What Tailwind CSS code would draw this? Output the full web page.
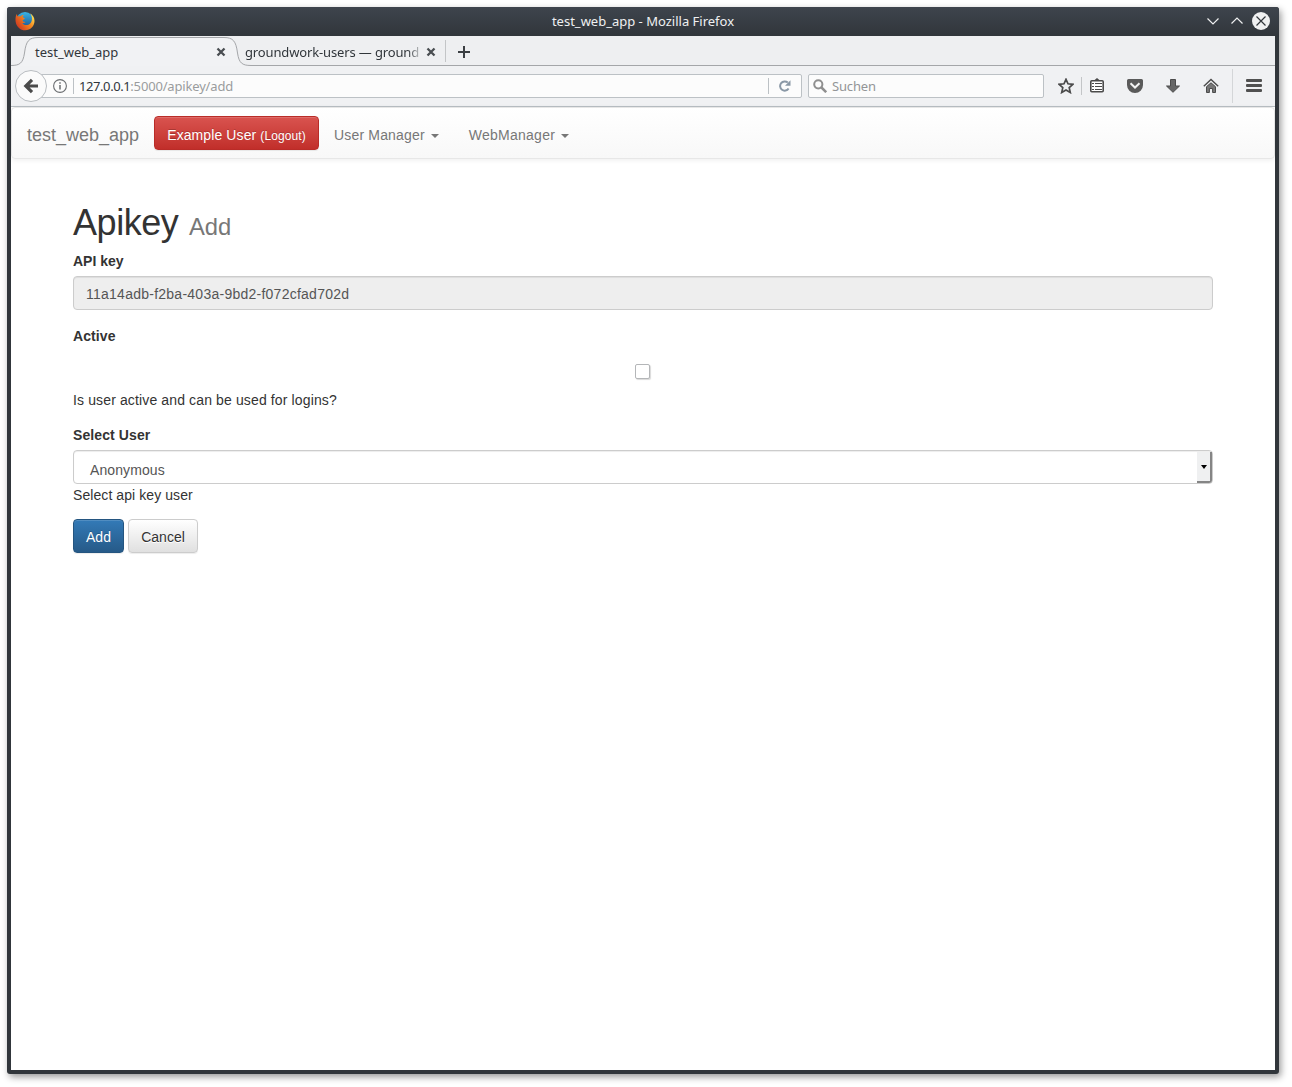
<!DOCTYPE html>
<html lang="en">
<head>
<meta charset="utf-8">
<title>test_web_app</title>
<script src="https://cdn.jsdelivr.net/npm/@tailwindcss/browser@4"></script>
</head>
<body class="bg-white w-[1292px] h-[1087px] overflow-hidden pt-[7px] pl-[7px]">
<div class="w-[1272px] h-[1067px] bg-[#31363b] rounded-[3px] shadow-[2px_3px_7px_0px_rgba(0,0,0,0.4)] px-1 pb-1 flex flex-col font-['Noto_Sans',sans-serif] text-[13px] text-[#31363b]">
  <!-- title bar -->
  <header class="h-[29px] shrink-0 -mx-1 px-2 flex items-center justify-between rounded-t-[3px] bg-linear-to-b from-[#3e444d] to-[#31363b] text-[#eff0f1]">
    <svg class="w-5 h-5 -mt-[2px]" viewBox="0 0 20 20">
      <defs>
        <linearGradient id="fox" x1="1" y1="0.2" x2="0.1" y2="0.8"><stop offset="0" stop-color="#ffe95a"/><stop offset=".4" stop-color="#f58a1f"/><stop offset="1" stop-color="#cf3a20"/></linearGradient>
        <linearGradient id="globe" x1="0" y1="0" x2="0" y2="1"><stop offset="0" stop-color="#39b4e6"/><stop offset="1" stop-color="#174684"/></linearGradient>
      </defs>
      <circle cx="10" cy="10" r="9" fill="url(#globe)"/>
      <path d="M1.600 3.200C.6 5.200.3 7.700.6 10.400c.6 5 4.700 8.900 9.600 8.900 5.200 0 9.300-4.200 9.300-9.300 0-3.400-1.700-6.200-4.500-7.800 1.500 1.900 2.200 4 1.900 6.200-.3 3.500-2.700 5.700-5.700 5.600-1.900 0-3.300-.9-3.900-2.100 1.300.4 2.500 0 3.200-.8-.6-.3-1.700-.1-2.500-.8-.6-.5-.3-1.300.3-1.500.7-.2 1.300-.8 1.500-1.500-1.100-.2-2-.8-2.200-1.700.3-.8.9-1.300 1.500-1.700-1.600-.1-2.900.4-3.900 1.500-.9-.2-1.700-.2-2.300.1-.5-.6-1-1.400-1-2.300z" fill="url(#fox)"/>
    </svg>
    <div class="pl-[44px]">test_web_app - Mozilla Firefox</div>
    <svg class="w-[64px] h-5 -mt-[1px]" viewBox="0 0 64 20" fill="none" stroke="#eff0f1" stroke-width="1.200">
      <path d="M.5 7.500 6 13l5.500-5.500M24.500 12.500 30 7l5.500 5.500"/>
      <circle cx="54" cy="10" r="9" fill="#eff0f1" stroke="none"/>
      <path d="m49.500 5.500 9 9m0-9-9 9" stroke="#31363b"/>
    </svg>
  </header>

  <!-- tabs -->
  <div class="relative h-[30px] shrink-0 bg-[#eeeff1]">
    <svg class="absolute inset-0 w-full h-[30px]" viewBox="0 0 1264 30" fill="none">
      <path d="M0 29.500C9 29.500 12 27 13.500 17 15 5 18 1.500 27 1.500H213c9 0 12 3.500 13.500 15.500C228 27 231 29.500 240 29.500V30H0z" fill="#f1f2f4"/>
      <path d="M0 29.500C9 29.500 12 27 13.500 17 15 5 18 1.500 27 1.500H213c9 0 12 3.500 13.500 15.500C228 27 231 29.500 240 29.500H1264" stroke="#a4a6a9"/>
    </svg>
    <div class="relative flex items-center h-full pl-6 pt-[2px]">
      <span class="w-[181px] pt-[2px]">test_web_app</span>
      <svg class="w-[10px] h-[10px] mr-[19px]" viewBox="0 0 10 10" stroke="#494d51" stroke-width="2.300"><path d="m1.500 1.500 7 7m0-7-7 7"/></svg>
      <span class="w-[175px] pt-[2px] whitespace-nowrap tracking-[-0.14px] mask-r-from-93% mask-r-to-102%">groundwork-users — ground</span>
      <svg class="w-[10px] h-[10px] ml-[6px]" viewBox="0 0 10 10" stroke="#494d51" stroke-width="2.300"><path d="m1.500 1.500 7 7m0-7-7 7"/></svg>
      <span class="w-px h-[22px] bg-[#c3c5c7] ml-[9px] -mt-[2px]"></span>
      <svg class="w-3 h-3 ml-[12px]" viewBox="0 0 12 12" stroke="#3b3f43" stroke-width="2"><path d="M6 0v12M0 6h12"/></svg>
    </div>
  </div>

  <!-- navigation toolbar -->
  <div class="h-[41px] shrink-0 bg-[#f0f1f3] border-b border-[#b9bfc4] flex items-center pl-1">
    <div class="relative z-10 w-8 h-8 shrink-0 rounded-full border border-[#b9bdc1] bg-[#fbfbfb] flex items-center justify-center">
      <svg class="w-4 h-4" viewBox="0 0 16 16" fill="none" stroke="#4b4b4b" stroke-width="3.200"><path d="M15 8H3.500M9 1.800 2.800 8 9 14.200"/></svg>
    </div>
    <div class="-ml-2 w-[763px] h-6 bg-[#fcfcfc] border border-[#bcc1c5] rounded-[2px] flex items-center pl-[13px]">
      <svg class="w-[14px] h-[14px]" viewBox="0 0 14 14" fill="none" stroke="#6a6d70"><circle cx="7" cy="7" r="6.400" stroke-width="1.100"/><path d="M7 6v4.500M7 3.200v1.600" stroke-width="1.500"/></svg>
      <span class="w-px h-4 bg-[#bcc1c5] ml-[6px] mr-[5px]"></span>
      <span class="text-[#9a9c9e] grow pt-[2px] tracking-[-0.17px]"><span class="text-[#31363b] tracking-[-0.42px]">127.0.0.1</span>:5000/apikey/add</span>
      <span class="w-px h-4 bg-[#bcc1c5]"></span>
      <svg class="w-3 h-3 ml-[10px] mr-[10px]" viewBox="0 0 12 12" fill="none" stroke="#8a98a6"><path d="M9.600 8.500A4.600 4.600 0 1 1 8.800 2.600" stroke-width="2"/><path d="M11.500.3v5.400H6z" fill="#8a98a6" stroke="none"/></svg>
    </div>
    <div class="ml-[6px] w-[236px] h-6 bg-[#fcfcfc] border border-[#bcc1c5] rounded-[2px] flex items-center pl-1 text-[#939597]">
      <svg class="w-[14px] h-[14px] mr-[5px]" viewBox="0 0 14 14" fill="none" stroke="#8f8f8f"><circle cx="5.300" cy="5.300" r="4.100" stroke-width="2"/><path d="m8.500 8.500 4.700 4.700" stroke-width="2.500"/></svg>
      <span class="pt-[2px] tracking-[-0.15px]">Suchen</span>
    </div>
    <div class="flex items-center ml-[14px]">
      <svg class="w-4 h-4" viewBox="0 0 16 16" fill="none" stroke="#4b4b4b" stroke-width="1.700"><path d="m8 1.300 2 4.500 4.900.5-3.700 3.300 1.100 4.900L8 12l-4.300 2.500 1.100-4.900L1.100 6.300 6 5.800z"/></svg>
      <span class="w-px h-[18px] bg-[#c3c5c7] ml-[7px] mr-[8px]"></span>
      <svg class="w-[14px] h-[15px] -mt-[1px]" viewBox="0 0 14 15"><path d="M7 0 10 2.500H4z" fill="#4b4b4b"/><rect x=".8" y="2.800" width="12.400" height="11" rx="1" fill="#fff" stroke="#4b4b4b" stroke-width="1.600"/><path d="M2 5.500h2M5 5.500h7M2 8.500h2M5 8.500h7M2 11.500h2M5 11.500h7" stroke="#4b4b4b" stroke-width="1.200"/></svg>
      <svg class="w-4 h-[14px] ml-[23px]" viewBox="0 0 16 14"><path d="M1.500 0h13A1.500 1.500 0 0 1 16 1.500V6A8 8 0 0 1 0 6V1.500A1.500 1.500 0 0 1 1.500 0z" fill="#5a5a5a"/><path d="M3.500 4.200 8 8.500l4.500-4.300" fill="none" stroke="#f3f3f3" stroke-width="2"/></svg>
      <svg class="w-[14px] h-[14px] ml-[23px]" viewBox="0 0 14 14"><path d="M4.500.5h5V7h4L7 13.300.5 7h4z" fill="#666" stroke="#4b4b4b"/></svg>
      <svg class="w-4 h-[15px] ml-[23px] -mt-[1px]" viewBox="0 0 16 15"><path d="M3.500 8.700 8 4.800l4.500 3.900V14.500H9.600v-4H6.400v4H3.500z" fill="#777" stroke="#4b4b4b"/><path d="M.8 8.300 8 1.500l7.200 6.800" fill="none" stroke="#4b4b4b" stroke-width="1.400"/></svg>
      <span class="w-px h-[34px] bg-[#d4d6d8] ml-[13px] mr-[13px]"></span>
      <svg class="w-4 h-[13px] -mt-[2px]" viewBox="0 0 16 13" fill="#505050"><rect width="16" height="3" rx="1"/><rect y="5" width="16" height="3" rx="1"/><rect y="10" width="16" height="3" rx="1"/></svg>
    </div>
  </div>

  <!-- page -->
  <main class="grow bg-white font-['Liberation_Sans',Arial,sans-serif] text-[14px] leading-5 text-[#333]">
    <nav class="h-[52px] border border-[#e7e7e7] rounded-[4px] bg-linear-to-b from-white to-[#f8f8f8] shadow-[0_1px_5px_rgba(0,0,0,0.075)] flex items-center pl-[15px] pt-[4px] text-[#777]">
      <span class="text-[18px] w-[127px]">test_web_app</span>
      <button class="h-[34px] w-[165px] -mt-[4px] pt-[4px] rounded-[4px] border border-[#b92c28] bg-linear-to-b from-[#d9534f] to-[#c12e2a] text-white whitespace-nowrap tracking-[0.1px] shadow-[inset_0_1px_0_rgba(255,255,255,0.15),0_1px_1px_rgba(0,0,0,0.075)] text-shadow-[0_-1px_0_rgba(0,0,0,0.2)]">Example User <span class="text-[12px]">(Logout)</span></button>
      <span class="ml-[15px] flex items-center tracking-[0.17px]">User Manager <i class="ml-[6px] mt-[1px] border-x-4 border-t-4 border-x-transparent border-t-[#777]"></i></span>
      <span class="ml-[30px] flex items-center tracking-[0.26px]">WebManager <i class="ml-[6px] mt-[1px] border-x-4 border-t-4 border-x-transparent border-t-[#777]"></i></span>
    </nav>
    <form class="px-[62px] pt-[44px] flex flex-col">
      <h1 class="text-[36px] leading-[39px] mb-[5px] tracking-[-0.45px]">Apikey <small class="text-[23.800px] tracking-normal text-[#777] ml-px">Add</small></h1>
      <label class="font-bold mb-[5px]">API key</label>
      <div class="h-[34px] rounded-[4px] border border-[#ccc] bg-[#eee] px-3 pt-[7px] text-[#555] tracking-[0.25px] shadow-[inset_0_1px_1px_rgba(0,0,0,0.075)] mb-[15px]">11a14adb-f2ba-403a-9bd2-f072cfad702d</div>
      <label class="font-bold pt-px mb-1 tracking-[0.1px]">Active</label>
      <div class="h-[40px] flex justify-center pt-[14px] pr-[2px]"><span class="w-[15px] h-[15px] rounded-[2px] border border-[#b4b6b8] bg-white shadow-[1px_1px_1px_rgba(0,0,0,0.15)]"></span></div>
      <span class="mb-[15px] tracking-[0.13px]">Is user active and can be used for logins?</span>
      <label class="font-bold mb-[5px] tracking-[0.1px]">Select User</label>
      <div class="h-[34px] rounded-[4px] border border-[#ccc] bg-white pl-4 text-[#555] shadow-[inset_0_1px_1px_rgba(0,0,0,0.075)] flex justify-between">
        <span class="pt-[9px] tracking-[0.1px]">Anonymous</span>
        <span class="w-[15px] mt-[1px] h-[31px] bg-[#eff0f1] border-r-2 border-b-2 border-[#858585] rounded-br-[3px] flex items-center justify-center"><i class="border-x-[3.500px] border-t-4 border-x-transparent border-t-black"></i></span>
      </div>
      <span class="mt-[1px] mb-[14px] tracking-[0.08px]">Select api key user</span>
      <div class="flex gap-1">
        <button class="h-[34px] w-[51px] pt-[2px] rounded-[4px] border border-[#245580] bg-linear-to-b from-[#337ab7] to-[#265a88] text-white shadow-[inset_0_1px_0_rgba(255,255,255,0.15),0_1px_1px_rgba(0,0,0,0.075)] text-shadow-[0_-1px_0_rgba(0,0,0,0.2)]">Add</button>
        <button class="h-[34px] w-[70px] pt-[2px] rounded-[4px] border border-[#ccc] bg-linear-to-b from-white to-[#e0e0e0] text-[#333] shadow-[inset_0_1px_0_rgba(255,255,255,0.15),0_1px_1px_rgba(0,0,0,0.075)] text-shadow-[0_1px_0_#fff]">Cancel</button>
      </div>
    </form>
  </main>
</div>
</body>
</html>
